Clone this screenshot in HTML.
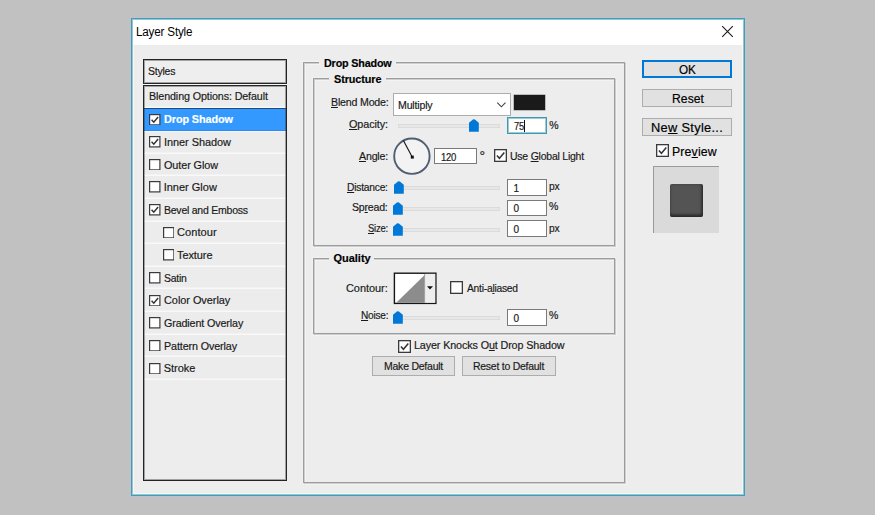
<!DOCTYPE html>
<html lang="en"><head><meta charset="utf-8"><title>Layer Style</title>
<style>
html,body{margin:0;padding:0}
body{width:875px;height:515px;overflow:hidden;background:#c1c1c1;position:relative;font-family:"Liberation Sans", sans-serif;}
.a{position:absolute;box-sizing:content-box}
.t{position:absolute;white-space:pre;transform-origin:0 0;line-height:14px;-webkit-text-stroke:0.18px currentColor;font-family:"Liberation Sans",sans-serif}
.t u{text-decoration:underline;text-underline-offset:1px;text-decoration-thickness:1px}
.grp{border:1px solid #9d9d9d;box-shadow:1px 1px 0 rgba(150,150,150,.4), inset 1px 1px 0 rgba(150,150,150,.4), 2px 2px 0 rgba(255,255,255,.35), inset 2px 2px 0 rgba(255,255,255,.35), -1px -1px 0 rgba(255,255,255,.3)}
.trk{height:2px;background:#e7e7e7;border:1px solid #dbdbdb}
.row{position:absolute;left:144px;width:142px;border-bottom:1px solid #f9f9f9;background:#ececec;box-shadow:inset 0 -1px 0 #f2f2f2}
</style></head>
<body>

<div class="a" style="left:130px;top:17px;width:616px;height:480px;background:#c6bdd3"></div>
<div class="a" style="left:131px;top:18px;width:612px;height:476px;border:1px solid #3f9fb3;background:#ededed;box-shadow:inset 0 0 0 1px rgba(63,159,179,.55), inset 0 0 0 2px rgba(255,255,255,.55)"></div>
<div class="a" style="left:133px;top:20px;width:610px;height:25px;background:#fff"></div>
<svg class="a" style="left:721.2px;top:25.4px" width="13" height="13" viewBox="0 0 13 13"><path d="M1.2 1.2 L11.8 11.8 M11.8 1.2 L1.2 11.8" stroke="#1a1a1a" stroke-width="1.1" fill="none"/></svg>
<div class="a" style="left:143px;top:59px;width:142px;height:23px;border:1px solid #242424;background:#eeeeee;box-shadow:inset 0 0 0 1px rgba(40,40,40,.38)"></div>
<div class="a" style="left:143px;top:85px;width:142px;height:394px;border:1px solid #242424;background:#ededed"></div>
<div class="row" style="top:86px;height:21.4px"></div>
<div class="row" style="top:131.03px;height:21.63px"></div>
<div class="row" style="top:153.66px;height:21.63px"></div>
<div class="row" style="top:176.29px;height:21.63px"></div>
<div class="row" style="top:198.92px;height:21.63px"></div>
<div class="row" style="top:221.55px;height:21.63px"></div>
<div class="row" style="top:244.18px;height:21.63px"></div>
<div class="row" style="top:266.81px;height:21.63px"></div>
<div class="row" style="top:289.44px;height:21.63px"></div>
<div class="row" style="top:312.07px;height:21.63px"></div>
<div class="row" style="top:334.7px;height:21.63px"></div>
<div class="row" style="top:357.33px;height:21.63px"></div>
<div class="row" style="top:108px;height:22px;background:#3399ff;border-top:1px solid #24497c;border-bottom-color:#f4f4fa;box-shadow:inset 0 -1px 0 #3089e6"></div>
<div class="a" style="left:144px;top:86px;width:142px;height:394px;box-shadow:inset 0 0 0 1px rgba(40,40,40,.38)"></div>
<div class="a" style="left:143px;top:84px;width:144px;height:1px;background:#f9f9f9"></div>
<svg class="a" style="left:149.1px;top:113.6px" width="11.5" height="11.5" viewBox="0 0 11.5 11.5"><rect x="0.6" y="0.6" width="10.3" height="10.3" fill="#fff" stroke="#3a3a3e" stroke-width="1.2"/><polyline points="2.57,5.84 4.78,8.23 9.11,3.1" fill="none" stroke="#333" stroke-width="1.5"/></svg>
<svg class="a" style="left:149.1px;top:136.23px" width="11.5" height="11.5" viewBox="0 0 11.5 11.5"><rect x="0.6" y="0.6" width="10.3" height="10.3" fill="#fff" stroke="#3a3a3e" stroke-width="1.2"/><polyline points="2.57,5.84 4.78,8.23 9.11,3.1" fill="none" stroke="#333" stroke-width="1.5"/></svg>
<svg class="a" style="left:149.1px;top:158.86px" width="11.5" height="11.5" viewBox="0 0 11.5 11.5"><rect x="0.6" y="0.6" width="10.3" height="10.3" fill="#fff" stroke="#3a3a3e" stroke-width="1.2"/></svg>
<svg class="a" style="left:149.1px;top:181.49px" width="11.5" height="11.5" viewBox="0 0 11.5 11.5"><rect x="0.6" y="0.6" width="10.3" height="10.3" fill="#fff" stroke="#3a3a3e" stroke-width="1.2"/></svg>
<svg class="a" style="left:149.1px;top:204.12px" width="11.5" height="11.5" viewBox="0 0 11.5 11.5"><rect x="0.6" y="0.6" width="10.3" height="10.3" fill="#fff" stroke="#3a3a3e" stroke-width="1.2"/><polyline points="2.57,5.84 4.78,8.23 9.11,3.1" fill="none" stroke="#333" stroke-width="1.5"/></svg>
<svg class="a" style="left:162.6px;top:226.75px" width="11.5" height="11.5" viewBox="0 0 11.5 11.5"><rect x="0.6" y="0.6" width="10.3" height="10.3" fill="#fff" stroke="#3a3a3e" stroke-width="1.2"/></svg>
<svg class="a" style="left:162.6px;top:249.38px" width="11.5" height="11.5" viewBox="0 0 11.5 11.5"><rect x="0.6" y="0.6" width="10.3" height="10.3" fill="#fff" stroke="#3a3a3e" stroke-width="1.2"/></svg>
<svg class="a" style="left:149.1px;top:272.01px" width="11.5" height="11.5" viewBox="0 0 11.5 11.5"><rect x="0.6" y="0.6" width="10.3" height="10.3" fill="#fff" stroke="#3a3a3e" stroke-width="1.2"/></svg>
<svg class="a" style="left:149.1px;top:294.64px" width="11.5" height="11.5" viewBox="0 0 11.5 11.5"><rect x="0.6" y="0.6" width="10.3" height="10.3" fill="#fff" stroke="#3a3a3e" stroke-width="1.2"/><polyline points="2.57,5.84 4.78,8.23 9.11,3.1" fill="none" stroke="#333" stroke-width="1.5"/></svg>
<svg class="a" style="left:149.1px;top:317.27px" width="11.5" height="11.5" viewBox="0 0 11.5 11.5"><rect x="0.6" y="0.6" width="10.3" height="10.3" fill="#fff" stroke="#3a3a3e" stroke-width="1.2"/></svg>
<svg class="a" style="left:149.1px;top:339.9px" width="11.5" height="11.5" viewBox="0 0 11.5 11.5"><rect x="0.6" y="0.6" width="10.3" height="10.3" fill="#fff" stroke="#3a3a3e" stroke-width="1.2"/></svg>
<svg class="a" style="left:149.1px;top:362.53px" width="11.5" height="11.5" viewBox="0 0 11.5 11.5"><rect x="0.6" y="0.6" width="10.3" height="10.3" fill="#fff" stroke="#3a3a3e" stroke-width="1.2"/></svg>
<div class="a grp" style="left:303px;top:62px;width:320px;height:419px"></div><div class="a" style="left:319px;top:61px;width:77px;height:4px;background:#ededed"></div>
<div class="a grp" style="left:313px;top:78px;width:300px;height:166px"></div><div class="a" style="left:329px;top:77px;width:57px;height:4px;background:#ededed"></div>
<div class="a grp" style="left:313px;top:258px;width:300px;height:74px"></div><div class="a" style="left:329px;top:257px;width:45px;height:4px;background:#ededed"></div>
<div class="a" style="left:393px;top:93px;width:116px;height:20.5px;border:1px solid #adadad;background:#fff"></div>
<svg class="a" style="left:496px;top:101px" width="11" height="8" viewBox="0 0 11 8"><path d="M1.3 1.6 L5.4 5.8 L9.5 1.6" stroke="#444" stroke-width="1.1" fill="none"/></svg>
<div class="a" style="left:514px;top:95px;width:31px;height:15px;background:#1a1a1a;box-shadow:0 0 0 0.5px #888"></div>
<div class="a trk" style="left:397.5px;top:124.3px;width:100px"></div>
<svg class="a" style="left:469.3px;top:119.2px" width="10" height="13" viewBox="0 0 10 13"><path d="M0 3.8 L3.9 0.45 Q4.9 -0.15 5.9 0.45 L9.8 3.8 L9.8 12.8 L0 12.8 Z" fill="#0078d7"/></svg>
<div class="a" style="left:507.3px;top:117.4px;width:37.4px;height:14.3px;background:#fff;border:1px solid #3c9ab2;box-shadow:inset 0 0 0 1px rgba(60,154,178,.5)"></div>
<div class="a" style="left:524px;top:120px;width:1px;height:12px;background:#111"></div>
<svg class="a" style="left:391px;top:135px" width="42" height="42" viewBox="0 0 42 42"><circle cx="20.9" cy="21.2" r="17.7" fill="#f3f3f3" stroke="#4f5e72" stroke-width="1.9"/><path d="M21.2 22 L12.4 5.6" stroke="#111" stroke-width="1.1"/><rect x="19.8" y="20.6" width="3" height="3" fill="#111"/></svg>
<div class="a" style="left:434.3px;top:148.4px;width:40.8px;height:13.8px;background:#fff;border:1px solid #7a7a7a"></div>
<svg class="a" style="left:494.3px;top:149.3px" width="13" height="13" viewBox="0 0 13 13"><rect x="0.65" y="0.65" width="11.7" height="11.7" fill="#fff" stroke="#3a3a3e" stroke-width="1.3"/><polyline points="2.9,6.6 5.4,9.3 10.3,3.5" fill="none" stroke="#333" stroke-width="1.5"/></svg>
<div class="a trk" style="left:397.5px;top:186.2px;width:100px"></div>
<svg class="a" style="left:394.2px;top:181.1px" width="10" height="13" viewBox="0 0 10 13"><path d="M0 3.8 L3.9 0.45 Q4.9 -0.15 5.9 0.45 L9.8 3.8 L9.8 12.8 L0 12.8 Z" fill="#0078d7"/></svg>
<div class="a" style="left:507.4px;top:179.3px;width:37.4px;height:14.4px;background:#fff;border:1px solid #7a7a7a"></div>
<div class="a trk" style="left:397.5px;top:206.6px;width:100px"></div>
<svg class="a" style="left:393.2px;top:201.6px" width="10" height="13" viewBox="0 0 10 13"><path d="M0 3.8 L3.9 0.45 Q4.9 -0.15 5.9 0.45 L9.8 3.8 L9.8 12.8 L0 12.8 Z" fill="#0078d7"/></svg>
<div class="a" style="left:507.4px;top:200px;width:37.4px;height:14.2px;background:#fff;border:1px solid #7a7a7a"></div>
<div class="a trk" style="left:397.5px;top:227.5px;width:100px"></div>
<svg class="a" style="left:393.2px;top:222.5px" width="10" height="13" viewBox="0 0 10 13"><path d="M0 3.8 L3.9 0.45 Q4.9 -0.15 5.9 0.45 L9.8 3.8 L9.8 12.8 L0 12.8 Z" fill="#0078d7"/></svg>
<div class="a" style="left:507.4px;top:220.2px;width:37.4px;height:14.4px;background:#fff;border:1px solid #7a7a7a"></div>
<svg class="a" style="left:393px;top:272px" width="44" height="33" viewBox="0 0 44 33"><rect x="1.4" y="1.2" width="41.5" height="30.2" fill="#fff" stroke="#161616" stroke-width="1.4"/><path d="M3.2 30.7 L31.4 3.2 L31.4 30.7 Z" fill="#8c8c8c"/><rect x="31.4" y="1.9" width="10.8" height="28.8" fill="#eeeeee"/><path d="M31.6 1.9 L31.6 30.7" stroke="#555" stroke-width="0.5"/><path d="M34 14.2 L40 14.2 L37 17.6 Z" fill="#111"/></svg>
<svg class="a" style="left:450px;top:281px" width="13" height="13" viewBox="0 0 13 13"><rect x="0.65" y="0.65" width="11.7" height="11.7" fill="#fff" stroke="#3a3a3e" stroke-width="1.3"/></svg>
<div class="a trk" style="left:397.5px;top:316.3px;width:100px"></div>
<svg class="a" style="left:393.2px;top:311.3px" width="10" height="13" viewBox="0 0 10 13"><path d="M0 3.8 L3.9 0.45 Q4.9 -0.15 5.9 0.45 L9.8 3.8 L9.8 12.8 L0 12.8 Z" fill="#0078d7"/></svg>
<div class="a" style="left:507.4px;top:309.4px;width:37.4px;height:14.2px;background:#fff;border:1px solid #7a7a7a"></div>
<svg class="a" style="left:397.5px;top:339.5px" width="13" height="13" viewBox="0 0 13 13"><rect x="0.65" y="0.65" width="11.7" height="11.7" fill="#fff" stroke="#3a3a3e" stroke-width="1.3"/><polyline points="2.9,6.6 5.4,9.3 10.3,3.5" fill="none" stroke="#333" stroke-width="1.5"/></svg>
<div class="a" style="left:371.7px;top:356px;width:81.3px;height:18.4px;background:#e1e1e1;border:1px solid #adadad"></div>
<div class="a" style="left:461.5px;top:356px;width:92.3px;height:18.4px;background:#e1e1e1;border:1px solid #adadad"></div>
<div class="a" style="left:642px;top:59.8px;width:86px;height:14.4px;background:#e1e1e1;border:2px solid #0078d7"></div>
<div class="a" style="left:642px;top:88.5px;width:88px;height:16.2px;background:#e1e1e1;border:1px solid #adadad"></div>
<div class="a" style="left:642px;top:117.6px;width:88px;height:16.2px;background:#e1e1e1;border:1px solid #adadad"></div>
<svg class="a" style="left:655.8px;top:144.4px" width="13" height="13" viewBox="0 0 13 13"><rect x="0.65" y="0.65" width="11.7" height="11.7" fill="#fff" stroke="#3a3a3e" stroke-width="1.3"/><polyline points="2.9,6.6 5.4,9.3 10.3,3.5" fill="none" stroke="#333" stroke-width="1.5"/></svg>
<div class="a" style="left:653px;top:166px;width:65px;height:66px;background:#dadada;border-top:1px solid #9a9a9a;border-left:1px solid #9a9a9a"></div>
<div class="a" style="left:670px;top:184.3px;width:33px;height:32.7px;border-radius:2px;background:#545454;box-shadow:inset 0 0 3px 1px rgba(0,0,0,.16), inset -1.5px -2.5px 2.5px rgba(0,0,0,.45)"></div>
<span class="t" style="left:135.5px;top:25px;font-size:12px;color:#000;letter-spacing:-0.18px;transform:scaleX(0.970);-webkit-text-stroke:0;">Layer Style</span>
<span class="t" style="left:148.3px;top:64px;font-size:11px;color:#1a1a1a;letter-spacing:-0.25px;transform:scaleX(0.954);">Styles</span>
<span class="t" style="left:148.5px;top:89px;font-size:11px;color:#1a1a1a;letter-spacing:-0.12px;transform:scaleX(0.976);">Blending Options: Default</span>
<span class="t" style="left:163.7px;top:112px;font-size:11px;color:#fff;font-weight:bold;letter-spacing:-0.09px;transform:scaleX(0.986);">Drop Shadow</span>
<span class="t" style="left:163.7px;top:135px;font-size:11px;color:#1a1a1a;letter-spacing:-0.04px;transform:scaleX(0.993);">Inner Shadow</span>
<span class="t" style="left:163.7px;top:158px;font-size:11px;color:#1a1a1a;letter-spacing:-0.09px;transform:scaleX(0.985);">Outer Glow</span>
<span class="t" style="left:163.7px;top:180px;font-size:11px;color:#1a1a1a;">Inner Glow</span>
<span class="t" style="left:163.7px;top:203px;font-size:11px;color:#1a1a1a;letter-spacing:-0.25px;transform:scaleX(0.955);">Bevel and Emboss</span>
<span class="t" style="left:177.2px;top:225px;font-size:11px;color:#1a1a1a;letter-spacing:0.04px;transform:scaleX(1.006);">Contour</span>
<span class="t" style="left:177.2px;top:248px;font-size:11px;color:#1a1a1a;letter-spacing:-0.05px;transform:scaleX(0.992);">Texture</span>
<span class="t" style="left:163.7px;top:271px;font-size:11px;color:#1a1a1a;letter-spacing:-0.25px;transform:scaleX(0.947);">Satin</span>
<span class="t" style="left:163.7px;top:293px;font-size:11px;color:#1a1a1a;letter-spacing:-0.04px;transform:scaleX(0.993);">Color Overlay</span>
<span class="t" style="left:163.7px;top:316px;font-size:11px;color:#1a1a1a;letter-spacing:-0.13px;transform:scaleX(0.976);">Gradient Overlay</span>
<span class="t" style="left:163.7px;top:339px;font-size:11px;color:#1a1a1a;letter-spacing:-0.12px;transform:scaleX(0.978);">Pattern Overlay</span>
<span class="t" style="left:163.7px;top:361px;font-size:11px;color:#1a1a1a;letter-spacing:-0.01px;">Stroke</span>
<span class="t" style="left:323.7px;top:56px;font-size:11px;color:#000;font-weight:bold;letter-spacing:-0.16px;transform:scaleX(0.977);">Drop Shadow</span>
<span class="t" style="left:333.8px;top:72px;font-size:11px;color:#000;font-weight:bold;letter-spacing:-0.09px;transform:scaleX(0.985);">Structure</span>
<span class="t" style="left:333.5px;top:251px;font-size:11px;color:#000;font-weight:bold;letter-spacing:-0.02px;">Quality</span>
<span class="t" style="left:330.5px;top:95px;font-size:11px;color:#1a1a1a;letter-spacing:-0.2px;transform:scaleX(0.966);"><u>B</u>lend Mode:</span>
<span class="t" style="left:349.2px;top:117px;font-size:11px;color:#1a1a1a;letter-spacing:-0.1px;transform:scaleX(0.983);"><u>O</u>pacity:</span>
<span class="t" style="left:359px;top:149px;font-size:11px;color:#1a1a1a;letter-spacing:-0.2px;transform:scaleX(0.967);"><u>A</u>ngle:</span>
<span class="t" style="left:347.2px;top:180px;font-size:11px;color:#1a1a1a;letter-spacing:-0.25px;transform:scaleX(0.934);"><u>D</u>istance:</span>
<span class="t" style="left:352.4px;top:200px;font-size:11px;color:#1a1a1a;letter-spacing:-0.23px;transform:scaleX(0.963);">Sp<u>r</u>ead:</span>
<span class="t" style="left:368px;top:221px;font-size:11px;color:#1a1a1a;letter-spacing:-0.25px;transform:scaleX(0.861);"><u>S</u>ize:</span>
<span class="t" style="left:346.4px;top:281px;font-size:11px;color:#1a1a1a;letter-spacing:-0.03px;transform:scaleX(0.995);">Contour:</span>
<span class="t" style="left:360.6px;top:308px;font-size:11px;color:#1a1a1a;letter-spacing:-0.25px;transform:scaleX(0.921);"><u>N</u>oise:</span>
<span class="t" style="left:397.8px;top:98px;font-size:11px;color:#1a1a1a;letter-spacing:-0.19px;transform:scaleX(0.964);">Multiply</span>
<span class="t" style="left:513.6px;top:120px;font-size:10px;color:#1a1a1a;letter-spacing:-0.25px;transform:scaleX(0.938);">75</span>
<span class="t" style="left:549.2px;top:118px;font-size:10.5px;color:#1a1a1a;">%</span>
<span class="t" style="left:441px;top:151px;font-size:10px;color:#1a1a1a;letter-spacing:-0.25px;transform:scaleX(0.951);">120</span>
<span class="t" style="left:479.4px;top:149px;font-size:14px;color:#1a1a1a;">°</span>
<span class="t" style="left:510px;top:149px;font-size:11px;color:#1a1a1a;letter-spacing:-0.24px;transform:scaleX(0.953);">Use <u>G</u>lobal Light</span>
<span class="t" style="left:513.4px;top:182px;font-size:10px;color:#1a1a1a;">1</span>
<span class="t" style="left:549.1px;top:179px;font-size:11px;color:#1a1a1a;letter-spacing:-0.25px;transform:scaleX(0.932);">px</span>
<span class="t" style="left:513.4px;top:202px;font-size:10px;color:#1a1a1a;">0</span>
<span class="t" style="left:549.1px;top:199px;font-size:10.5px;color:#1a1a1a;">%</span>
<span class="t" style="left:513.4px;top:223px;font-size:10px;color:#1a1a1a;">0</span>
<span class="t" style="left:549.1px;top:221px;font-size:11px;color:#1a1a1a;letter-spacing:-0.25px;transform:scaleX(0.932);">px</span>
<span class="t" style="left:466.5px;top:281px;font-size:11px;color:#1a1a1a;letter-spacing:-0.25px;transform:scaleX(0.932);">Anti-a<u>l</u>iased</span>
<span class="t" style="left:513.4px;top:312px;font-size:10px;color:#1a1a1a;">0</span>
<span class="t" style="left:549.1px;top:308px;font-size:10.5px;color:#1a1a1a;">%</span>
<span class="t" style="left:413.7px;top:338px;font-size:11px;color:#1a1a1a;letter-spacing:-0.12px;transform:scaleX(0.978);">Layer Knocks O<u>u</u>t Drop Shadow</span>
<span class="t" style="left:383.7px;top:359px;font-size:11px;color:#1a1a1a;letter-spacing:-0.25px;transform:scaleX(0.955);">Make Default</span>
<span class="t" style="left:472.5px;top:359px;font-size:11px;color:#1a1a1a;letter-spacing:-0.25px;transform:scaleX(0.949);">Reset to Default</span>
<span class="t" style="left:679px;top:63px;font-size:12px;color:#000;letter-spacing:-0.25px;transform:scaleX(0.977);">OK</span>
<span class="t" style="left:671.5px;top:92px;font-size:12px;color:#000;letter-spacing:0.08px;transform:scaleX(1.010);">Reset</span>
<span class="t" style="left:650.6px;top:121px;font-size:12px;color:#000;letter-spacing:0.3px;transform:scaleX(1.066);">Ne<u>w</u> Style...</span>
<span class="t" style="left:671.8px;top:145px;font-size:12px;color:#000;letter-spacing:0.16px;transform:scaleX(1.022);">Pre<u>v</u>iew</span>

</body></html>
